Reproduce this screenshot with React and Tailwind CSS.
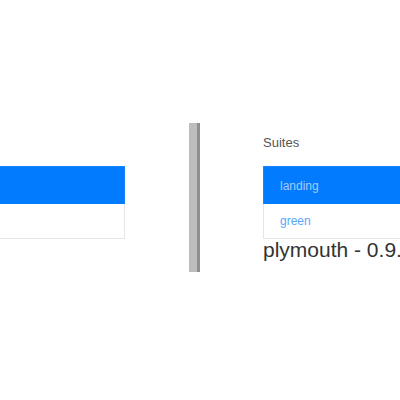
export default function App() {
  return (
    <div className="w-[400px] h-[400px] bg-white overflow-hidden" style={{ fontFamily: '"Liberation Sans", Arial, sans-serif' }}>
      <div className="flex items-start pt-[123px]">
        <div className="w-[125px] mt-[43px] shrink-0">
          <div className="h-[38px] bg-[#037bfe] border-r border-t border-[#1a86fd]"></div>
          <div className="h-[35px] bg-white border-r border-b border-[#e6e6e6]"></div>
        </div>
        <div className="ml-[64px] flex w-[11px] h-[149px] shrink-0">
          <div className="w-[8px] bg-[#bdbdbd]"></div>
          <div className="w-[3px] bg-[#8f8f8f]"></div>
        </div>
        <div className="ml-[63px] flex-1 min-w-0">
          <div className="h-[43px] pt-[12px] text-[13px] leading-[16px] text-[#555]">Suites</div>
          <div className="w-[160px]">
            <div className="h-[38px] bg-[#037bfe] border-t border-l border-[#1a86fd] pl-[16px] flex items-center text-[12px] text-[#a3cbfb]">landing</div>
            <div className="h-[35px] bg-white border-l border-b border-[#e6e6e6] pl-[16px] flex items-center text-[12px] text-[#5aa5fb]">green</div>
          </div>
          <div className="text-[21px] leading-[24px] text-[#333] whitespace-nowrap mt-[-1px]">plymouth - 0.9.3</div>
        </div>
      </div>
    </div>
  );
}
